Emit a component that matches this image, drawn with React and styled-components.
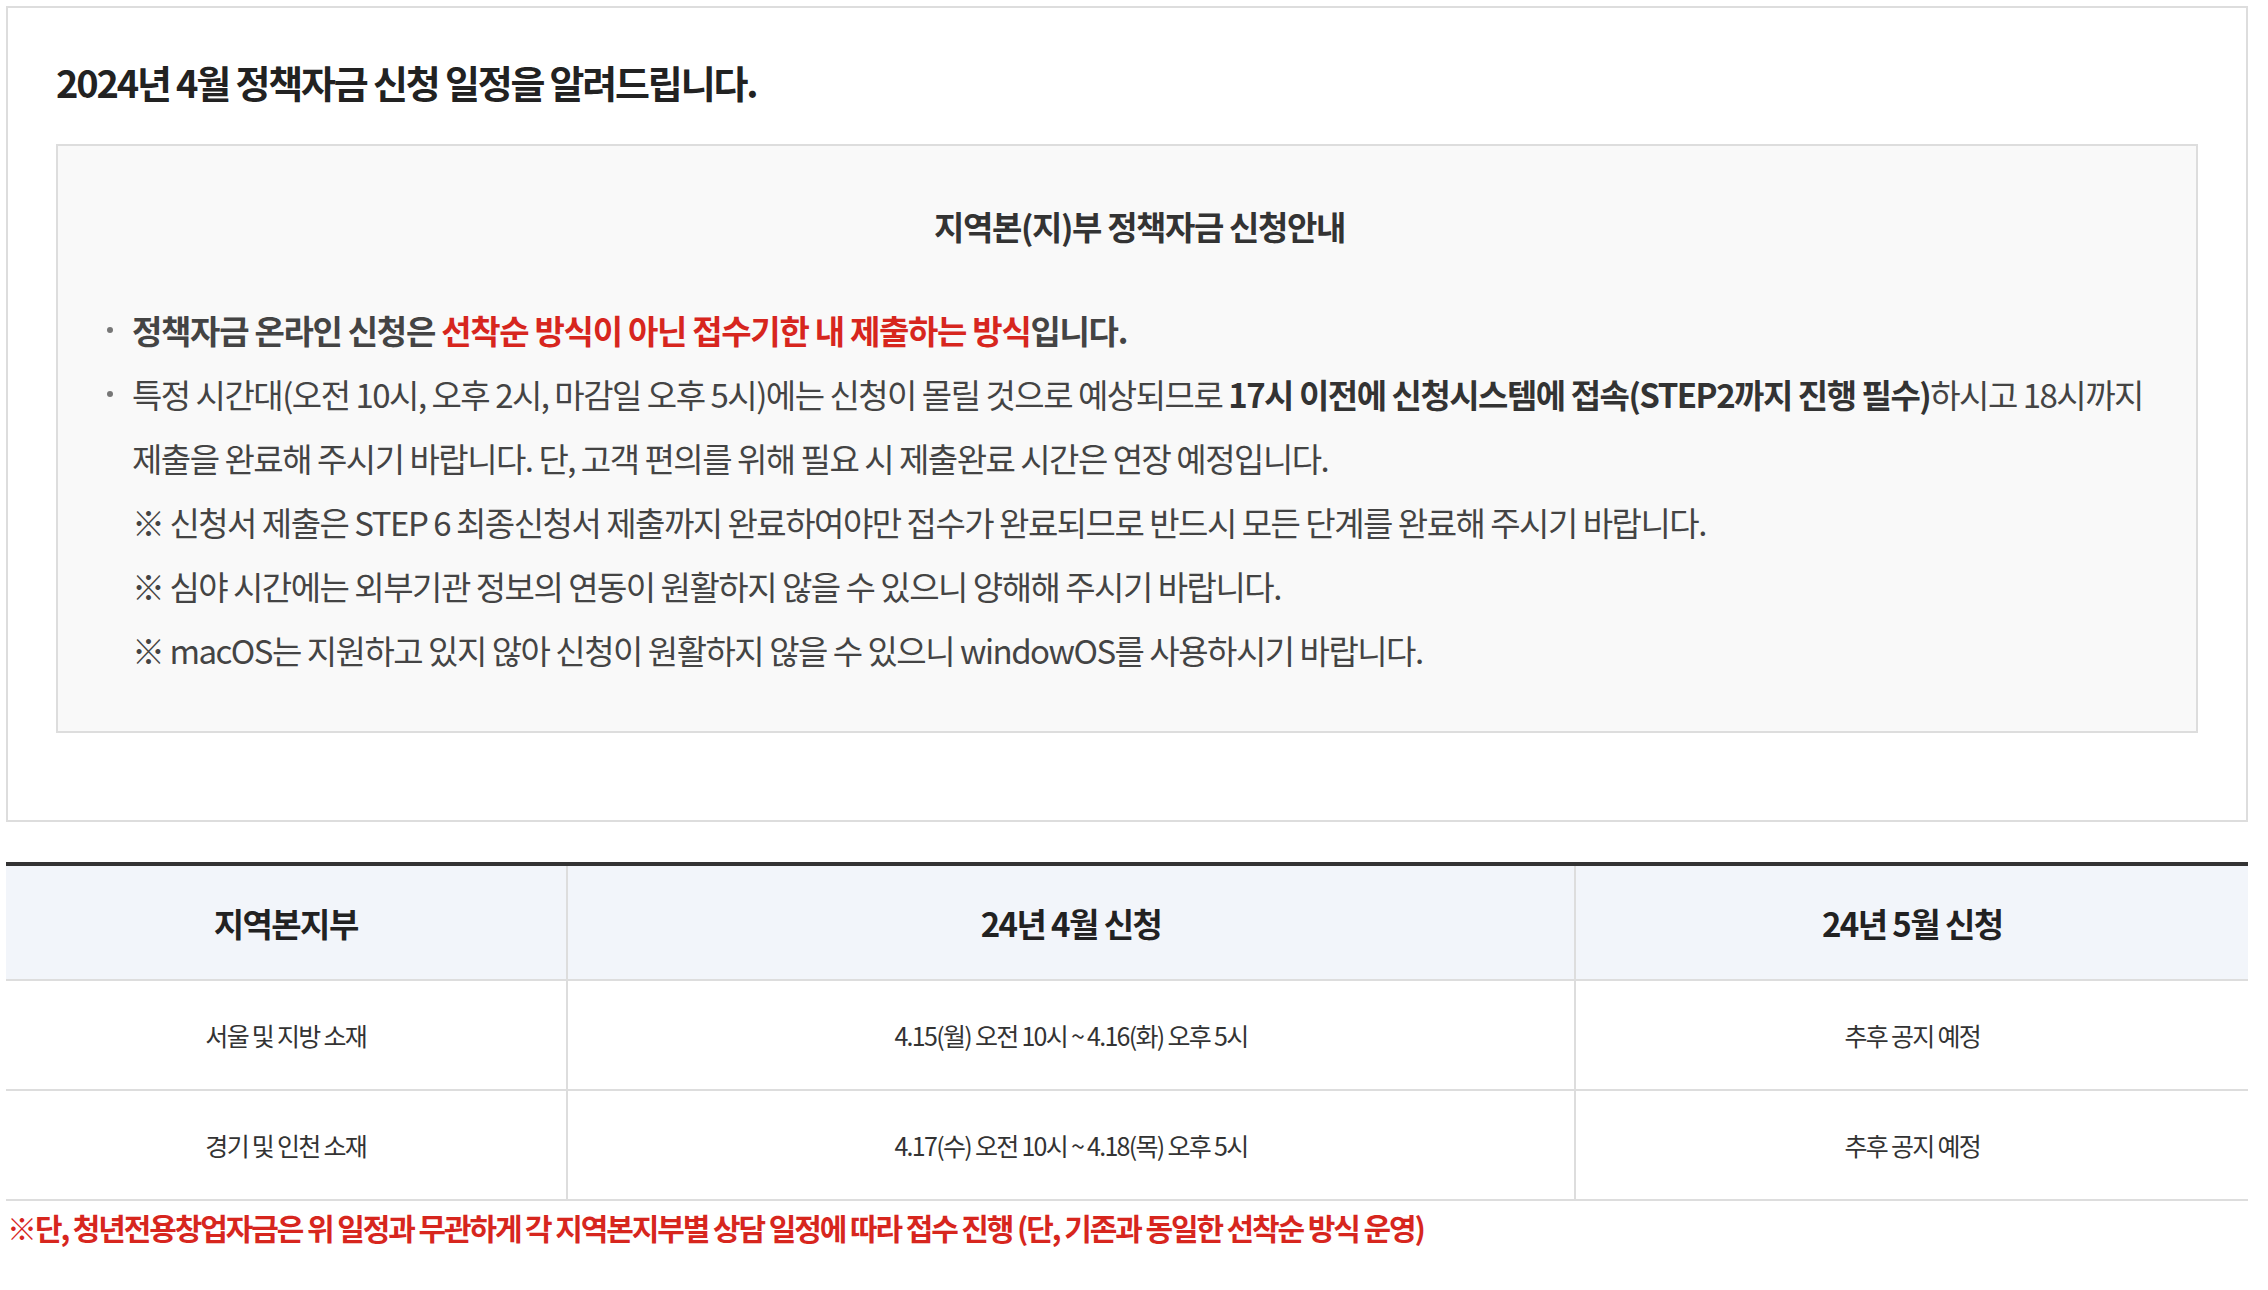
import React from "react";
import styled, { createGlobalStyle } from "styled-components";

const GlobalStyle = createGlobalStyle`
  html, body {
    margin: 0;
    padding: 0;
    background: #ffffff;
  }
  body {
    font-family: "Noto Sans CJK KR", "Noto Sans", sans-serif;
    color: #333333;
  }
  * { box-sizing: border-box; }
`;

const Page = styled.div`
  padding: 6px 20px 40px 6px;
  width: 2268px;
`;

const NoticeBox = styled.section`
  border: 2px solid #dddddd;
  padding: 48px 48px 87px 48px;
`;

const Title = styled.h2`
  margin: 0 0 36px;
  font-size: 38px;
  line-height: 52px;
  font-weight: 700;
  color: #222222;
  letter-spacing: -2.2px;
`;

const InfoBox = styled.div`
  background: #f9f9f9;
  border: 2px solid #dddddd;
  padding: 48px 40px 49px 33px;
`;

const SubTitle = styled.h3`
  margin: 0 0 40px;
  text-align: center;
  font-size: 33px;
  line-height: 64px;
  font-weight: 700;
  color: #333333;
  letter-spacing: -1.4px;
  padding-left: 32px;
`;

const List = styled.ul`
  margin: 0;
  padding: 0;
  list-style: none;
`;

const Item = styled.li`
  position: relative;
  padding-left: 41px;
  font-size: 33px;
  line-height: 64px;
  letter-spacing: ${(p) => (p.$bold ? "-1.3px" : "-1.5px")};
  color: #444444;
  font-weight: ${(p) => (p.$bold ? 700 : 400)};

  &::before {
    content: "";
    position: absolute;
    left: 16px;
    top: 29px;
    width: 6px;
    height: 6px;
    border-radius: 50%;
    background: #777777;
  }
`;

const Strong = styled.strong`
  font-weight: 700;
  color: ${(p) => (p.$red ? "#d7261e" : "#333333")};
`;

const Line = styled.span`
  display: block;
`;

const Table = styled.table`
  width: 100%;
  margin-top: 40px;
  border-collapse: collapse;
  border-top: 4px solid #333333;
  table-layout: fixed;
`;

const Th = styled.th`
  height: 116px;
  background: #f2f5fa;
  border-bottom: 2px solid #dddddd;
  border-left: ${(p) => (p.$first ? "none" : "2px solid #dddddd")};
  font-size: 33px;
  font-weight: 700;
  color: #222222;
  letter-spacing: -1.6px;
  text-align: center;
  vertical-align: middle;
  padding: 0;
`;

const Td = styled.td`
  height: 110px;
  border-bottom: 2px solid #dddddd;
  border-left: ${(p) => (p.$first ? "none" : "2px solid #dddddd")};
  font-size: 25px;
  font-weight: 400;
  color: #333333;
  letter-spacing: -1.7px;
  text-align: center;
  vertical-align: middle;
  padding: 0;
`;

const Note = styled.p`
  margin: 6px 0 0;
  padding-left: 1px;
  font-size: 30px;
  line-height: 40px;
  font-weight: 700;
  color: #d7261e;
  letter-spacing: -2.1px;
`;

const rows = [
  ["서울 및 지방 소재", "4.15(월) 오전 10시 ~ 4.16(화) 오후 5시", "추후 공지 예정"],
  ["경기 및 인천 소재", "4.17(수) 오전 10시 ~ 4.18(목) 오후 5시", "추후 공지 예정"],
];

export default function App() {
  return (
    <Page>
      <GlobalStyle />
      <NoticeBox>
        <Title>2024년 4월 정책자금 신청 일정을 알려드립니다.</Title>
        <InfoBox>
          <SubTitle>지역본(지)부 정책자금 신청안내</SubTitle>
          <List>
            <Item $bold>
              정책자금 온라인 신청은{" "}
              <Strong $red>선착순 방식이 아닌 접수기한 내 제출하는 방식</Strong>입니다.
            </Item>
            <Item>
              특정 시간대(오전 10시, 오후 2시, 마감일 오후 5시)에는 신청이 몰릴 것으로 예상되므로{" "}
              <Strong>17시 이전에 신청시스템에 접속(STEP2까지 진행 필수)</Strong>하시고 18시까지
              제출을 완료해 주시기 바랍니다. 단, 고객 편의를 위해 필요 시 제출완료 시간은 연장 예정입니다.
              <Line>※ 신청서 제출은 STEP 6 최종신청서 제출까지 완료하여야만 접수가 완료되므로 반드시 모든 단계를 완료해 주시기 바랍니다.</Line>
              <Line>※ 심야 시간에는 외부기관 정보의 연동이 원활하지 않을 수 있으니 양해해 주시기 바랍니다.</Line>
              <Line>※ macOS는 지원하고 있지 않아 신청이 원활하지 않을 수 있으니 windowOS를 사용하시기 바랍니다.</Line>
            </Item>
          </List>
        </InfoBox>
      </NoticeBox>
      <Table>
        <colgroup>
          <col style={{ width: "25%" }} />
          <col style={{ width: "45%" }} />
          <col style={{ width: "30%" }} />
        </colgroup>
        <thead>
          <tr>
            <Th $first>지역본지부</Th>
            <Th>24년 4월 신청</Th>
            <Th>24년 5월 신청</Th>
          </tr>
        </thead>
        <tbody>
          {rows.map((r) => (
            <tr key={r[0]}>
              <Td $first>{r[0]}</Td>
              <Td>{r[1]}</Td>
              <Td>{r[2]}</Td>
            </tr>
          ))}
        </tbody>
      </Table>
      <Note>※단, 청년전용창업자금은 위 일정과 무관하게 각 지역본지부별 상담 일정에 따라 접수 진행 (단, 기존과 동일한 선착순 방식 운영)</Note>
    </Page>
  );
}
